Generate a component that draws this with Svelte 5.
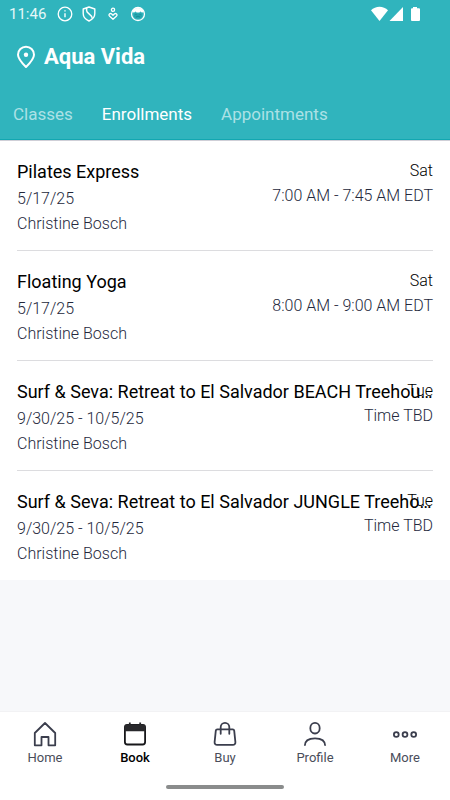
<script>
  const tabs = ['Classes', 'Enrollments', 'Appointments'];
  let activeTab = $state('Enrollments');

  const enrollments = [
    { title: 'Pilates Express', date: '5/17/25', teacher: 'Christine Bosch', day: 'Sat', time: '7:00 AM - 7:45 AM EDT' },
    { title: 'Floating Yoga', date: '5/17/25', teacher: 'Christine Bosch', day: 'Sat', time: '8:00 AM - 9:00 AM EDT' },
    { title: 'Surf & Seva: Retreat to El Salvador BEACH Treehou…', date: '9/30/25 - 10/5/25', teacher: 'Christine Bosch', day: 'Tue', time: 'Time TBD' },
    { title: 'Surf & Seva: Retreat to El Salvador JUNGLE Treeho…', date: '9/30/25 - 10/5/25', teacher: 'Christine Bosch', day: 'Tue', time: 'Time TBD' }
  ];

  const links = ['Home', 'Book', 'Buy', 'Profile', 'More'];
</script>

<div class="app">
  <header>
    <div class="status">
      <span class="clock">11:46</span>
      <svg width="16" height="16" viewBox="0 0 16 16" fill="none" stroke="#fff" stroke-width="1.3">
        <circle cx="8" cy="8" r="6.8" />
        <path d="M8 7.2v4M8 4.2v1.4" stroke-width="1.4" />
      </svg>
      <svg width="14" height="16" viewBox="0 0 14 16" fill="none" stroke="#fff" stroke-width="1.4" stroke-linejoin="round">
        <path d="M7 1l5.800 2v4.600c0 3.400-2.200 5.900-5.800 7.400C3.400 13.500 1.200 11 1.200 7.600V3z" />
        <path d="M4.600 2v2.600c0 3.200 5.600 3.600 5.600 8" stroke-width="1.500" />
      </svg>
      <svg class="heart" width="10" height="14" viewBox="0 0 10 14" fill="none" stroke="#fff" stroke-width="1.300" stroke-linejoin="round">
        <circle cx="5" cy="2.800" r="1.600" />
        <path d="M5 12.200L1.400 8.900C.3 7.600 2 5.900 3.400 6.800L5 8.300l1.600-1.500c1.400-.9 3.100.8 2 2.100z" />
      </svg>
      <svg width="16" height="16" viewBox="0 0 16 16" fill="none">
        <circle cx="8" cy="8" r="6.500" stroke="#fff" stroke-width="1.300" />
        <path d="M2 6.300C3 3.200 5.200 2 8 2s5 1.200 6 4.300l-2.200.2-1.200-1-1.300 1.100H6.700L5.400 5.500l-1.200 1z" fill="#fff" />
        <path d="M4 7.500h8v3.300c-1.500 2.300-6.500 2.300-8 0z" fill="#168e97" opacity=".45" />
        <path d="M5.300 8.300h1.300M9.400 8.300h1.300M6 11l2-.8 2 .8" stroke="#168e97" />
      </svg>
      <svg class="signal" width="52" height="16" viewBox="0 0 52 16" fill="#fff">
        <path d="M1 4.300C5.500-.5 13.500-.5 18 4.300L9.500 15z" />
        <path d="M19.500 15L33 1v14z" />
        <path d="M43 1h4v1.200h2a1 1 0 0 1 1 1V14a1 1 0 0 1-1 1h-7a1 1 0 0 1-1-1V3.200a1 1 0 0 1 1-1h1z" />
      </svg>
    </div>

    <div class="place">
      <svg width="20" height="24" viewBox="0 0 20 24" fill="none" stroke="#fff" stroke-width="2" stroke-linejoin="round">
        <path d="M10 22C5.500 17.500 2 13.900 2 9.700a8 8 0 0 1 16 0c0 4.200-3.500 7.800-8 12.300z" />
        <circle cx="10" cy="9.700" r="2.200" fill="#fff" stroke="none" />
      </svg>
      <h1>Aqua Vida</h1>
    </div>

    <div class="tabs" role="tablist">
      {#each tabs as tab}
        <button type="button" role="tab" aria-selected={activeTab === tab} class:active={activeTab === tab} onclick={() => (activeTab = tab)}>{tab}</button>
      {/each}
    </div>
  </header>

  <main>
    <ul>
      {#each enrollments as item}
        <li>
          <div class="details">
            <h2>{item.title}</h2>
            <p>{item.date}</p>
            <p>{item.teacher}</p>
          </div>
          <div class="when">
            <p class="day">{item.day}</p>
            <p>{item.time}</p>
          </div>
        </li>
      {/each}
    </ul>
  </main>

  <footer>
    <nav>
      {#each links as name}
        <a href="#{name.toLowerCase()}" class:current={name === 'Book'} aria-current={name === 'Book' ? 'page' : undefined}>
          <svg width="26" height="26" viewBox="0 0 26 26" fill="none" stroke="#3b3e4d" stroke-width="1.800">
            {#if name === 'Home'}
              <path d="M2.800 12L13 2l10.200 10v12.300h-6.700v-8.300h-7v8.300H2.800z" stroke-linejoin="round" />
            {:else if name === 'Book'}
              <rect x="2.900" y="4" width="20.200" height="19.500" rx="2.500" stroke="#17171a" />
              <path d="M2.500 10.300V6a2.500 2.500 0 0 1 2.500-2.500h16A2.500 2.500 0 0 1 23.500 6v4.300z" fill="#29292c" stroke="none" />
              <path d="M7.800 1.500v3M18.200 1.500v3" stroke="#29292c" />
            {:else if name === 'Buy'}
              <path d="M5.300 8.300h15.400a1.500 1.500 0 0 1 1.500 1.300l1.200 11.500a2.500 2.500 0 0 1-2.500 2.800H5.100a2.500 2.500 0 0 1-2.500-2.800L3.800 9.600a1.500 1.500 0 0 1 1.500-1.300z" />
              <path d="M8.700 12.800V6.100a4.300 4.300 0 0 1 8.600 0v6.700" stroke-linecap="round" />
            {:else if name === 'Profile'}
              <ellipse cx="13" cy="7.200" rx="4.700" ry="5.300" />
              <path d="M2.800 24.800c0-5 4-7.500 10.200-7.500s10.200 2.500 10.200 7.500" />
            {:else}
              <circle cx="4.300" cy="13.500" r="2.400" />
              <circle cx="13" cy="13.500" r="2.400" />
              <circle cx="21.700" cy="13.500" r="2.400" />
            {/if}
          </svg>
          <span>{name}</span>
        </a>
      {/each}
    </nav>
    <div class="handle"></div>
  </footer>
</div>

<style>
  :global(body) {
    margin: 0;
    background: #f7f8fa;
  }
  .app {
    display: flex;
    flex-direction: column;
    min-height: 100vh;
    font-family: Roboto, "Liberation Sans", sans-serif;
    color: #000;
  }
  header {
    background: #30b4bd;
    border-bottom: 1px solid #12a7b1;
    color: #fff;
  }
  .status {
    display: flex;
    align-items: center;
    height: 27px;
    padding: 0 28px 0 9px;
    gap: 9px;
  }
  .clock {
    margin-right: 2px;
    font-size: 15px;
    line-height: 20px;
    color: #e6f7f8;
  }
  .heart {
    margin: 0 3px;
  }
  .signal {
    margin-left: auto;
  }
  .place {
    display: flex;
    align-items: center;
    gap: 8px;
    height: 60px;
    padding: 0 16px;
  }
  h1 {
    margin: 0;
    font-size: 22px;
    line-height: 28px;
    font-weight: 700;
  }
  .tabs {
    display: flex;
    gap: 5px;
    height: 52px;
    padding: 0 1px;
  }
  .tabs button {
    padding: 2px 12px 0;
    border: 0;
    background: none;
    color: #ace1e5;
    font: 400 17px/24px Roboto, "Liberation Sans", sans-serif;
    cursor: pointer;
  }
  .tabs button.active {
    color: #fff;
  }
  main {
    flex: 1;
  }
  ul {
    margin: 0;
    padding: 0 17px;
    list-style: none;
    background: #fff;
    border-top: 1px solid #cfcfd7;
  }
  li {
    display: grid;
    padding: 17px 0 14px;
    border-bottom: 1px solid #dcdcdf;
  }
  li:last-child {
    border-bottom: 0;
  }
  .details,
  .when {
    grid-area: 1 / 1;
  }
  .when {
    justify-self: end;
    text-align: right;
  }
  h2 {
    margin: 0;
    font-size: 18px;
    line-height: 28px;
    font-weight: 400;
    white-space: nowrap;
  }
  p {
    margin: 0;
    font-size: 16px;
    line-height: 25px;
    font-weight: 300;
    color: #24283c;
  }
  .day {
    color: #000;
  }
  footer {
    background: #fff;
    border-top: 1px solid #f2f2f4;
  }
  nav {
    display: flex;
    height: 73px;
  }
  nav a {
    flex: 1;
    display: flex;
    flex-direction: column;
    align-items: center;
    gap: 2px;
    padding-top: 9px;
    color: #4a4d5a;
    font-size: 13px;
    line-height: 18px;
    text-decoration: none;
  }
  nav a.current {
    color: #000;
    font-weight: 500;
  }
  .handle {
    width: 118px;
    height: 4px;
    margin: 0 auto 11px;
    border-radius: 2px;
    background: #8a8c8c;
  }
</style>
